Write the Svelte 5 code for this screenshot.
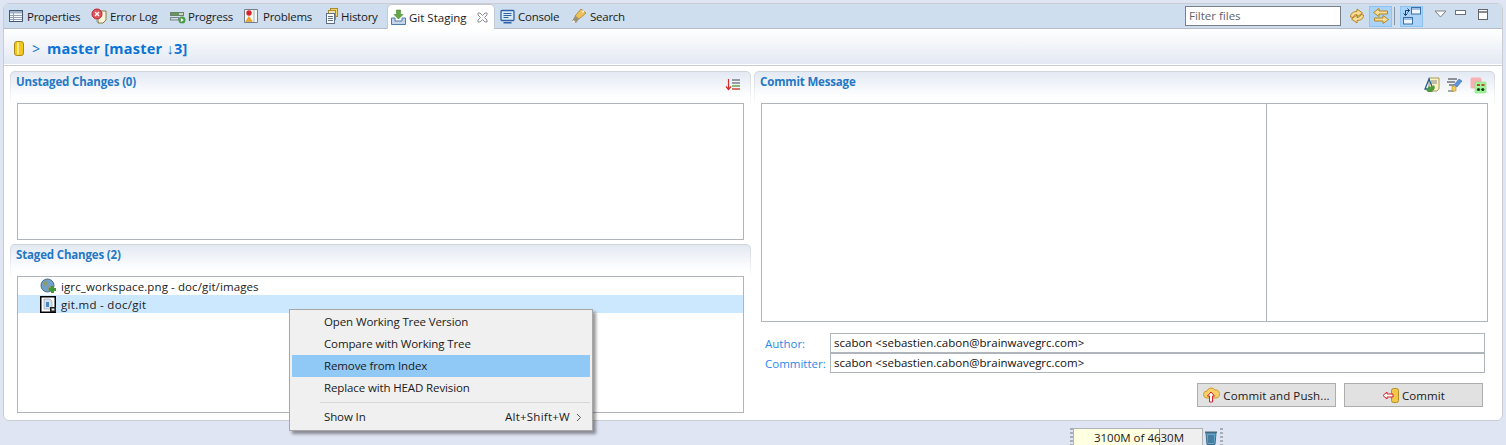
<script>
  const tabs = [
    { id: 'props', label: 'Properties', w: 83, g: 3 },
    { id: 'err', label: 'Error Log', w: 79, g: 3 },
    { id: 'prog', label: 'Progress', w: 73, g: 2 },
    { id: 'prob', label: 'Problems', w: 82, g: 4 },
    { id: 'hist', label: 'History', w: 62, g: 0 }
  ];
  const menu = [
    { label: 'Open Working Tree Version' },
    { label: 'Compare with Working Tree' },
    { label: 'Remove from Index', active: true },
    { label: 'Replace with HEAD Revision' }
  ];
</script>

{#snippet tabIcon(id)}
  <svg class="ico" width="16" height="16" viewBox="0 0 16 16">
    {#if id === 'props'}
      <rect x="1.500" y="2.500" width="13" height="11" fill="#fff" stroke="#45586f"/>
      <rect x="2" y="3" width="12" height="2.500" fill="#9fb4cc"/>
      <path d="M2 7.500h12M2 9.500h12M2 11.500h12M5.500 5v8" stroke="#8ea2b8" fill="none"/>
    {:else if id === 'err'}
      <path d="M7 3h8v9l-3 3H7z" fill="#fdf6d8" stroke="#8a7a4a"/>
      <circle cx="6" cy="6" r="5" fill="#e2525a" stroke="#b32a33"/>
      <path d="M4 4l4 4M8 4l-4 4" stroke="#fff" stroke-width="1.400"/>
      <path d="M5 12.500h1v1H5zM7 13.500h1v1H7z" fill="#888"/>
    {:else if id === 'prog'}
      <rect x="0.500" y="4.500" width="13" height="3" fill="#c9d6c4" stroke="#6f7f72"/>
      <rect x="1" y="5" width="8" height="2" fill="#5f9d55"/>
      <rect x="0.500" y="9.500" width="8" height="2.500" fill="#d0d8de" stroke="#7c8790"/>
      <circle cx="12" cy="12" r="3.500" fill="#4a9a46"/>
      <path d="M10.800 10l3 2-3 2z" fill="#fff"/>
    {:else if id === 'prob'}
      <path d="M1.500 1.500h13v13h-13z" fill="#f5f5f2" stroke="#75808c"/>
      <path d="M11 2v12" stroke="#a9b5c2"/>
      <circle cx="6" cy="5" r="2.700" fill="#d8232a"/>
      <path d="M6 8.500l3.300 5H2.700z" fill="#f5a623" stroke="#c98510" stroke-width=".5"/>
    {:else if id === 'hist'}
      <rect x="5.500" y="0.500" width="7" height="8" fill="#f6d66a" stroke="#a88b2c"/>
      <rect x="3.500" y="2.500" width="7" height="9" fill="#f0e6b0" stroke="#a88b2c"/>
      <rect x="1.500" y="5.500" width="8" height="10" fill="#fff" stroke="#5c6f87"/>
      <path d="M3 8.500h5M3 10.500h5M3 12.500h5" stroke="#5c6f87"/>
    {/if}
  </svg>
{/snippet}

<div class="view">
  <div class="tabs">
    {#each tabs as t}
      <div class="tab" style="width:{t.w}px;gap:{t.g}px">{@render tabIcon(t.id)}<span>{t.label}</span></div>
    {/each}
    <div class="tab on">
      <svg class="ico" width="17" height="17" viewBox="0 0 17 17">
        <path d="M1.500 9v6.500h14V9h-3.500v3H5V9z" fill="#c4d4ea" stroke="#5279ad"/>
        <path d="M6.500 1h4v4.500H13L8.500 10 4 5.500h2.500z" fill="#62a744" stroke="#4a8733" stroke-width=".6"/>
      </svg>
      <span>Git Staging</span>
      <svg class="close" width="11" height="11" viewBox="0 0 11 11">
        <path d="M1 1h2l2.500 2.500L8 1h2v2L7.500 5.500 10 8v2H8L5.500 7.500 3 10H1V8l2.500-2.500L1 3z" fill="#fff" stroke="#8a8f96"/>
      </svg>
    </div>
    <div class="tab con">
      <svg class="ico" width="15" height="15" viewBox="0 0 14 15">
        <rect x="0.500" y="1.500" width="13" height="10" rx="1" fill="#dbe8f6" stroke="#2d62a8" stroke-width="1.300"/>
        <path d="M3 4.500h8M3 6.500h8M3 8.500h5" stroke="#2d62a8"/>
        <path d="M3 13h8v1.500H3z" fill="#2d62a8"/>
      </svg>
      <span>Console</span>
    </div>
    <div class="tab sea">
      <svg class="ico" width="16" height="16" viewBox="0 0 16 16">
        <path d="M4 8l6-7 5 4-7 6z" fill="#eec25a" stroke="#a9802c" stroke-width=".8"/>
        <circle cx="12" cy="3.500" r="1" fill="#fff"/>
        <path d="M1 13l3-5 4 3-3 4z" fill="#9a9078"/>
        <path d="M0.500 15l2-3 2 2z" fill="#f4f0e0"/>
      </svg>
      <span>Search</span>
    </div>

    <div class="tools">
      <div class="filter">Filter files</div>
      <svg class="tool a" width="16" height="16" viewBox="0 0 16 16">
        <path d="M1.500 9C1.500 5.500 4 3.500 8 3.500V1l5.500 4L8 9V6.500C6 6.500 4.500 7.500 4 9.500z" fill="#f7dc95" stroke="#b5851f"/>
        <path d="M14.500 7c0 3.500-2.500 5.500-6.500 5.500V15L2.500 11 8 7v2.500c2 0 3.500-1 4-3z" fill="#f7dc95" stroke="#b5851f"/>
      </svg>
      <div class="tog b">
        <svg width="18" height="18" viewBox="0 0 18 18">
          <path d="M7 1.500v2.500h8.500v3H7v2.500L1.500 5.500z" fill="#f7dd9a" stroke="#b5851f"/>
          <path d="M11 8.500v2.500H2.500v3H11v2.500l5.500-4z" fill="#f7dd9a" stroke="#b5851f"/>
        </svg>
      </div>
      <div class="sep"></div>
      <div class="tog c">
        <svg width="20" height="18" viewBox="0 0 20 18">
          <rect x="9.500" y="0.500" width="9" height="6.500" fill="#eef5fc" stroke="#3a6ea5"/>
          <path d="M10 1h8v2h-8z" fill="#9fc0e2"/>
          <rect x="1.500" y="10.500" width="9" height="6.500" fill="#eef5fc" stroke="#3a6ea5"/>
          <path d="M2 11h8v2H2z" fill="#9fc0e2"/>
          <path d="M3.500 8.500V3.500h4M5.500 1.500l2 2-2 2M1.500 6.500l2 2 2-2" stroke="#123f7a" fill="none"/>
        </svg>
      </div>
      <svg class="tool d" width="13" height="8" viewBox="0 0 13 8"><path d="M1 1h11L6.500 7z" fill="#fff" stroke="#7c8086"/></svg>
      <svg class="tool e" width="12" height="6" viewBox="0 0 12 6"><rect x="0.500" y="0.500" width="10" height="4" fill="#fff" stroke="#6d7278"/></svg>
      <svg class="tool f" width="12" height="12" viewBox="0 0 12 12"><rect x="0.500" y="0.500" width="9" height="10" fill="#fff" stroke="#62666c"/><path d="M1 3h8" stroke="#62666c" stroke-width="1.300"/></svg>
    </div>
  </div>

  <div class="head">
    <svg class="repo" width="10" height="15" viewBox="0 0 10 15">
      <rect x="0.500" y="0.500" width="9" height="14" rx="2.500" fill="#f2c81f" stroke="#ab8a1c"/>
      <rect x="3" y="1.500" width="2" height="12" fill="#fbe98a"/>
    </svg>
    <span class="gt">&gt;</span>
    <span class="branch">master [master ↓3]</span>
  </div>
  <div class="rule"></div>

  <div class="body">
    <div class="left">
      <section class="sec unstaged">
        <div class="sechead">
          <span>Unstaged Changes (0)</span>
          <svg class="sort" width="16" height="16" viewBox="0 0 16 16">
            <path d="M3.500 2v10M1 9.500l2.500 3 2.500-3" stroke="#d22a2a" fill="none" stroke-width="1.200"/>
            <path d="M7 3h8M7 6h8" stroke="#7b8087" stroke-width="1.300"/>
            <path d="M7 9h8" stroke="#63a24c" stroke-width="1.300"/>
            <path d="M7 12h8" stroke="#c94a3a" stroke-width="1.300"/>
          </svg>
        </div>
        <div class="box b1"></div>
      </section>
      <section class="sec staged">
        <div class="sechead"><span>Staged Changes (2)</span></div>
        <div class="box b2">
          <div class="row r1">
            <svg width="17" height="17" viewBox="0 0 17 17">
              <circle cx="7.500" cy="7.500" r="6.500" fill="#6ea0c8" stroke="#4b6f8c"/>
              <path d="M3 5l3-2 2 1-1 3-3 1zM8 9l4-1 1 2-3 3-2-1z" fill="#8f9c6a"/>
              <rect x="9" y="10" width="7" height="3" fill="#3f9a36"/>
              <rect x="11" y="8" width="3" height="7" fill="#3f9a36"/>
            </svg>
            <span>igrc_workspace.png - doc/git/images</span>
          </div>
          <div class="row r2">
            <svg width="17" height="17" viewBox="0 0 17 17">
              <rect x="0.500" y="0.500" width="15" height="16" fill="#fff" stroke="#000"/>
              <rect x="1" y="1" width="14" height="15" fill="none" stroke="#000"/>
              <path d="M4 3h6l2 2v8H4z" fill="#d6e2ee" stroke="#8199b3" stroke-width=".6"/>
              <path d="M6 6h3v5H6z" fill="#4a87c4"/>
              <path d="M10 11h6v5h-6z" fill="#222"/>
              <path d="M11.500 13.500h3M13 12v3M12 12.500l2 2M14 12.500l-2 2" stroke="#fff" stroke-width=".7"/>
            </svg>
            <span>git.md - doc/git</span>
          </div>
        </div>
      </section>
    </div>

    <section class="sec right">
      <div class="sechead">
        <span>Commit Message</span>
        <div class="sectools">
          <svg width="16" height="16" viewBox="0 0 16 16">
            <path d="M5 1h10v11l-2 2H5z" fill="#fbf3c2" stroke="#a7995b"/>
            <path d="M7 4h6M7 6h6" stroke="#888"/>
            <path d="M5 2L1 12h8z" fill="none" stroke="#245a96" stroke-width="1.300"/>
            <path d="M2 13l3-4 2 1 3-2 1 3-3 4H4z" fill="#4f9a3f"/>
          </svg>
          <svg width="16" height="16" viewBox="0 0 16 16">
            <path d="M1 2h9M0 5h8M2 8h5" stroke="#333" stroke-width="1"/>
            <path d="M1 14h6" stroke="#555"/>
            <path d="M12 2l3 2-5 6-3-2z" fill="#5c95dc" stroke="#3c6ea8" stroke-width=".6"/>
            <path d="M5 9l4 1 0 4-4 0z" fill="#f3cf5a" stroke="#b38e25" stroke-width=".6"/>
          </svg>
          <svg width="17" height="17" viewBox="0 0 17 17">
            <rect x="0.500" y="0.500" width="11" height="11" rx="1.500" fill="#f7b1b5"/>
            <rect x="5" y="5" width="11" height="11" rx="1" fill="#a3f59a" stroke="#7fdd79" stroke-width=".6"/>
            <path d="M7 8h3M11.500 8h3" stroke="#c51616" stroke-width="1.600"/>
            <circle cx="8.500" cy="12.500" r="1.600" fill="#123f12"/>
            <circle cx="12.800" cy="12.500" r="1.600" fill="#123f12"/>
          </svg>
        </div>
      </div>
      <div class="msg"><div class="msgleft"></div></div>
      <div class="person first">
        <span class="lab">Author:</span><div class="input">scabon &lt;sebastien.cabon@brainwavegrc.com&gt;</div>
      </div>
      <div class="person">
        <span class="lab">Committer:</span><div class="input">scabon &lt;sebastien.cabon@brainwavegrc.com&gt;</div>
      </div>
      <div class="btns">
        <div class="btn">
          <svg width="17" height="17" viewBox="0 0 17 17">
            <path d="M4 11a3.500 3.500 0 0 1 0-7 4.500 4.500 0 0 1 8-1 4 4 0 0 1 1 8z" fill="#f9cf6b" stroke="#d19a26"/>
            <path d="M8 5l3.500 4H9.500v6h-3V9H4.500z" fill="#fff" stroke="#d61f26"/>
          </svg>
          <span class="cp">Commit and Push...</span>
        </div>
        <div class="btn">
          <svg width="17" height="15" viewBox="0 0 17 15">
            <rect x="9.500" y="0.500" width="7" height="14" rx="2" fill="#f2c84a" stroke="#b38e25"/>
            <path d="M1 7.500l4-3.500v2h6v3H5v2z" fill="#fff" stroke="#d61f26"/>
          </svg>
          <span class="cm">Commit</span>
        </div>
      </div>
    </section>
  </div>
</div>

<div class="status">
  <div class="grip"></div>
  <div class="heap">
    <div class="used"></div>
    <div class="mark"></div>
    <span>3100M of 4630M</span>
  </div>
  <svg class="trash" width="14" height="16" viewBox="0 0 14 16">
    <path d="M1 2.500h12v1.500H1z" fill="#4d6a7a"/>
    <path d="M2 4h10l-1 11.500H3z" fill="#63a6cf" stroke="#3e6a86"/>
    <path d="M5 6v8M7 6v8M9 6v8" stroke="#2c566f"/>
  </svg>
  <div class="grip"></div>
</div>

<div class="menu">
  {#each menu as m}
    <div class="mi" class:act={m.active}>{m.label}</div>
  {/each}
  <div class="msep"></div>
  <div class="mi last"><span>Show In</span><span class="acc">Alt+Shift+W</span><svg width="6" height="9" viewBox="0 0 6 9"><path d="M1 1l3.500 3.500L1 8" fill="none" stroke="#555"/></svg></div>
</div>

<style>
  :global(body) {
    margin: 0;
    background: #e0e5f4;
    font: 11.5px "Open Sans", "Noto Sans", sans-serif;
    color: #1a1a1a;
    overflow: hidden;
  }
  .view {
    margin: 3px 3px 0 3px;
    height: 418px;
    background: #fff;
    border: 1px solid #c9cdd3;
    border-radius: 6px;
    overflow: hidden;
    box-sizing: border-box;
    position: relative;
    width: 1500px;
  }
  .tabs {
    display: flex;
    height: 25px;
    background: #cfdeee;
    border-bottom: 1px solid #b6bdc8;
    box-sizing: border-box;
    align-items: center;
    padding-left: 4px;
  }
  .tab {
    display: flex;
    align-items: center;
    height: 24px;
    box-sizing: border-box;
    flex: none;
    white-space: nowrap;
    letter-spacing: -0.25px;
  }
  .tab.on {
    background: #fff;
    height: 25px;
    margin-bottom: -1px;
    width: 108px;
    padding-left: 2px;
    border-radius: 5px 5px 0 0;
    border: 1px solid #c4cad3;
    border-bottom: none;
    gap: 2px;
    letter-spacing: 0;
  }
  .close { margin-left: 8px; }
  .con { margin-left: 5px; width: 71px; gap: 3px; }
  .sea { width: 60px; gap: 3px; }
  .tools {
    margin-left: auto;
    display: flex;
    align-items: center;
    position: relative;
    height: 24px;
  }
  .filter {
    width: 151px;
    height: 18px;
    border: 1px solid #7a7f86;
    background: #fff;
    color: #5f6368;
    padding-left: 3px;
    line-height: 17px;
    margin-right: 8px;
  }
  .tool.a { margin-right: 4px; }
  .tog {
    height: 21px;
    display: flex;
    align-items: center;
    justify-content: center;
    background: #abd3f7;
    border: 1px solid #8ec4f3;
    box-sizing: border-box;
    width: 23px;
    flex: none;
  }
  .sep { width: 1px; height: 18px; background: #8b95a0; margin: 0 5px 0 2px; }
  .tool.d { margin: -4px 0 0 11px; }
  .tool.e { margin: -6px 0 0 8px; }
  .tool.f { margin: -2px 12px 0 11px; }

  .head {
    height: 36px;
    display: flex;
    align-items: center;
    background: linear-gradient(#fff, #e3e9f3);
    border-bottom: 1px solid #fff;
    box-sizing: border-box;
    padding: 4px 0 0 10px;
  }
  .repo { margin-right: 8px; }
  .gt { color: #0a74d6; font-size: 14px; margin-right: 7px; }
  .branch { color: #0a74d6; font-size: 14.5px; font-weight: 700; letter-spacing: 0.25px; }
  .rule { height: 1px; background: #c8ccd3; }
  .body {
    display: grid;
    grid-template-columns: 741px 741px;
    gap: 3px;
    padding: 5px 0 0 6px;
  }
  .left { display: flex; flex-direction: column; gap: 3px; }
  .sec {
    position: relative;
    padding: 1px 1px 0;
    border-radius: 5px 5px 0 0;
    background: linear-gradient(#cfd4db, #fff 34px);
    box-sizing: border-box;
  }
  .sec::before {
    content: "";
    position: absolute;
    inset: 1px 1px 0;
    border-radius: 4px 4px 0 0;
    background: linear-gradient(#e3e9f3, #fff 25px);
  }
  .unstaged { height: 170px; }
  .staged { height: 170px; }
  .right { height: 345px; }
  .sechead {
    height: 31px;
    padding: 2px 5px 0 5px;
    color: #2478c6;
    font-weight: 700;
    line-height: 16px;
    letter-spacing: -0.16px;
    position: relative;
    box-sizing: border-box;
  }
  .sort { position: absolute; right: 9px; top: 5px; }
  .sectools { position: absolute; right: 7px; top: 5px; display: flex; gap: 7px; }
  .box {
    margin: 0 6px;
    position: relative;
    border: 1px solid #b0b5bb;
    background: #fff;
    box-sizing: border-box;
    height: 137px;
  }
  .row { display: flex; align-items: center; gap: 4px; padding-left: 22px; height: 18px; white-space: nowrap; letter-spacing: 0.1px; }
  .r2 { background: #cce8ff; letter-spacing: 0.3px; }
  .msg {
    margin: 0 6px;
    height: 219px;
    position: relative;
    border: 1px solid #b0b5bb;
    box-sizing: border-box;
    display: flex;
  }
  .msgleft { width: 504px; border-right: 1px solid #b0b5bb; }
  .person { display: flex; align-items: center; height: 20px; padding-left: 10px; position: relative; }
  .person.first { margin-top: 11px; }
  .lab { width: 65px; color: #2a88e8; flex: none; }
  .input {
    width: 655px;
    height: 20px;
    border: 1px solid #b0b5bb;
    box-sizing: border-box;
    line-height: 18px;
    padding-left: 3px;
    color: #111;
  }
  .btns { display: flex; justify-content: flex-end; gap: 8px; margin: 10px 11px 0 0; position: relative; }
  .btn {
    width: 139px;
    height: 24px;
    background: #e1e1e1;
    border: 1px solid #adadad;
    box-sizing: border-box;
    display: flex;
    align-items: center;
    justify-content: center;
    gap: 3px;
  }
  .cp { letter-spacing: 0.1px; }
  .cm { letter-spacing: 0.1px; }
  .status {
    display: flex;
    align-items: flex-start;
    position: absolute;
    left: 1070px;
    top: 428px;
    height: 17px;
  }
  .grip { width: 3px; height: 17px; background: repeating-linear-gradient(#a9adb5 0 2px, transparent 2px 4px); }
  .heap {
    position: relative;
    width: 130px;
    height: 17px;
    border: 1px solid #b0b3b8;
    border-bottom: none;
    background: #efefef;
    box-sizing: border-box;
    text-align: center;
    line-height: 17px;
    padding-left: 2px;
  }
  .used { position: absolute; left: 0; top: 0; bottom: 0; width: 86px; background: #ffffe1; }
  .mark { position: absolute; left: 85px; top: 0; bottom: 0; width: 1px; background: #a0a0a0; }
  .heap span { position: relative; }
  .trash { margin: 1px 2px 0 1px; }
  .menu {
    position: absolute;
    left: 289px;
    top: 309px;
    width: 304px;
    height: 122px;
    box-sizing: border-box;
    background: #f0f0f0;
    border: 1px solid #a7a7a7;
    box-shadow: 3px 3px 3px rgba(0,0,0,.4);
    padding: 1px 2px;
  }
  .mi {
    height: 22px;
    line-height: 22px;
    padding-left: 32px;
    white-space: nowrap;
    letter-spacing: -0.12px;
  }
  .mi.act { background: #90c8f6; }
  .msep { height: 1px; background: #d7d7d7; margin: 3px 0 3px 28px; }
  .mi.last { display: flex; align-items: center; height: 22px; padding-right: 8px; margin-top: 3px; }
  .acc { margin-left: auto; margin-right: 6px; letter-spacing: 0.25px; }
</style>
